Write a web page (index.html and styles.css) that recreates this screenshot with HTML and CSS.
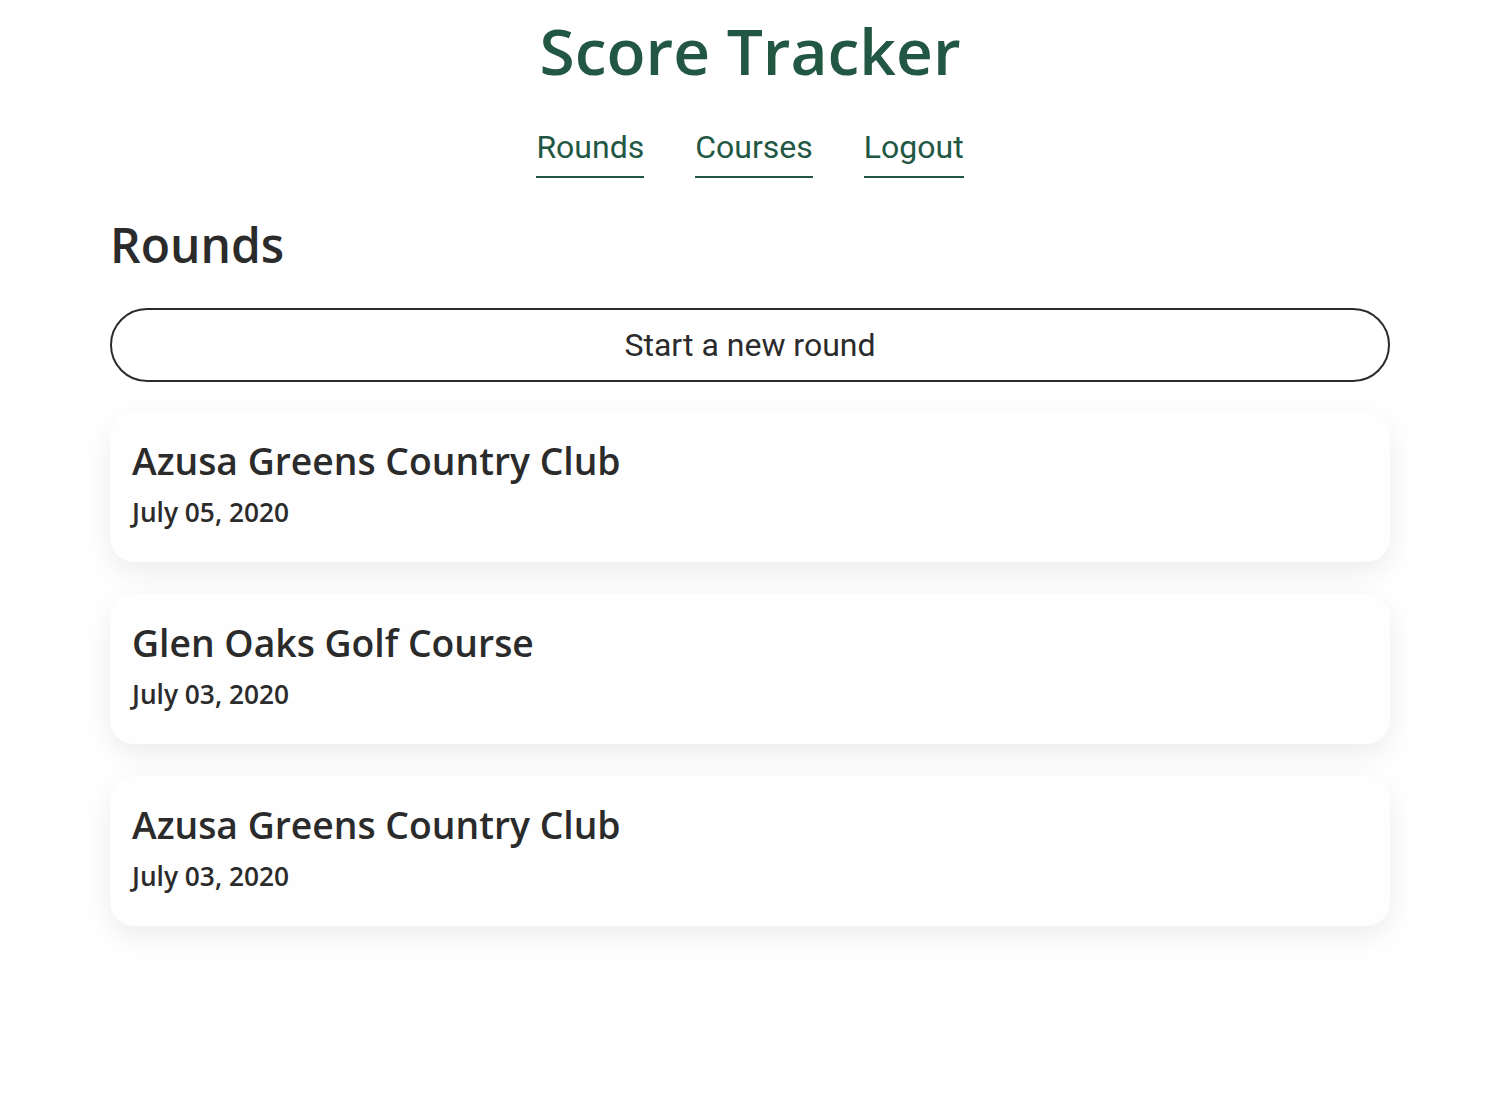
FILE: index.html
```html
<!DOCTYPE html>
<html lang="en">
<head>
<meta charset="utf-8">
<title>Score Tracker</title>
<link rel="stylesheet" href="styles.css">
</head>
<body>
<div class="page">
  <header class="header">
    <h1 class="title">Score Tracker</h1>
    <nav class="nav">
      <a class="nav-link" href="#">Rounds</a>
      <a class="nav-link" href="#">Courses</a>
      <a class="nav-link" href="#">Logout</a>
    </nav>
  </header>
  <main class="main">
    <h2 class="section-title">Rounds</h2>
    <button class="new-round" type="button">Start a new round</button>
    <ul class="round-list">
      <li class="round-card">
        <h3 class="round-course">Azusa Greens Country Club</h3>
        <p class="round-date">July 05, 2020</p>
      </li>
      <li class="round-card">
        <h3 class="round-course">Glen Oaks Golf Course</h3>
        <p class="round-date">July 03, 2020</p>
      </li>
      <li class="round-card">
        <h3 class="round-course">Azusa Greens Country Club</h3>
        <p class="round-date">July 03, 2020</p>
      </li>
    </ul>
  </main>
</div>
</body>
</html>
```

FILE: styles.css
```css
* { box-sizing: border-box; }
html, body { margin: 0; padding: 0; background: #fff; }
body {
  padding-right: 8px;
  font-family: "Open Sans", sans-serif;
  color: #2b2b2b;
}
.page {
  width: 1280px;
  margin: 0 auto;
  padding-bottom: 120px;
}
.header {
  display: flex;
  flex-direction: column;
  align-items: center;
}
.title {
  margin: 7px 0 0;
  font-family: "Open Sans", sans-serif;
  font-weight: 600;
  font-size: 64px;
  line-height: 87px;
  color: #225743;
}
.nav {
  display: flex;
  gap: 51px;
  margin-top: 33px;
}
.nav-link {
  font-family: Roboto, sans-serif;
  font-size: 32px;
  line-height: 40px;
  color: #225743;
  text-decoration: none;
  border-bottom: 2px solid #225743;
  padding-bottom: 9px;
}
.main {
  display: flex;
  flex-direction: column;
}
.section-title {
  margin: 35px 0 0;
  font-size: 48px;
  font-weight: 600;
  line-height: 64px;
  color: #2b2b2b;
}
.new-round {
  margin-top: 31px;
  height: 74px;
  width: 100%;
  border: 2px solid #2b2b2b;
  border-radius: 37px;
  background: #fff;
  font-family: Roboto, sans-serif;
  font-size: 32px;
  color: #2b2b2b;
  cursor: pointer;
}
.round-list {
  list-style: none;
  margin: 30px 0 0;
  padding: 0;
  display: flex;
  flex-direction: column;
  gap: 32px;
}
.round-card {
  height: 150px;
  border-radius: 24px;
  background: #fefefe;
  box-shadow: 0 10px 30px rgba(0, 0, 0, 0.08);
  padding: 25px 22px 0;
}
.round-course {
  margin: 0;
  font-size: 37.3px;
  font-weight: 600;
  line-height: 48px;
  color: #2b2b2b;
}
.round-date {
  margin: 9px 0 0;
  font-size: 26.3px;
  font-weight: 600;
  line-height: 36px;
  color: #2b2b2b;
}
```
